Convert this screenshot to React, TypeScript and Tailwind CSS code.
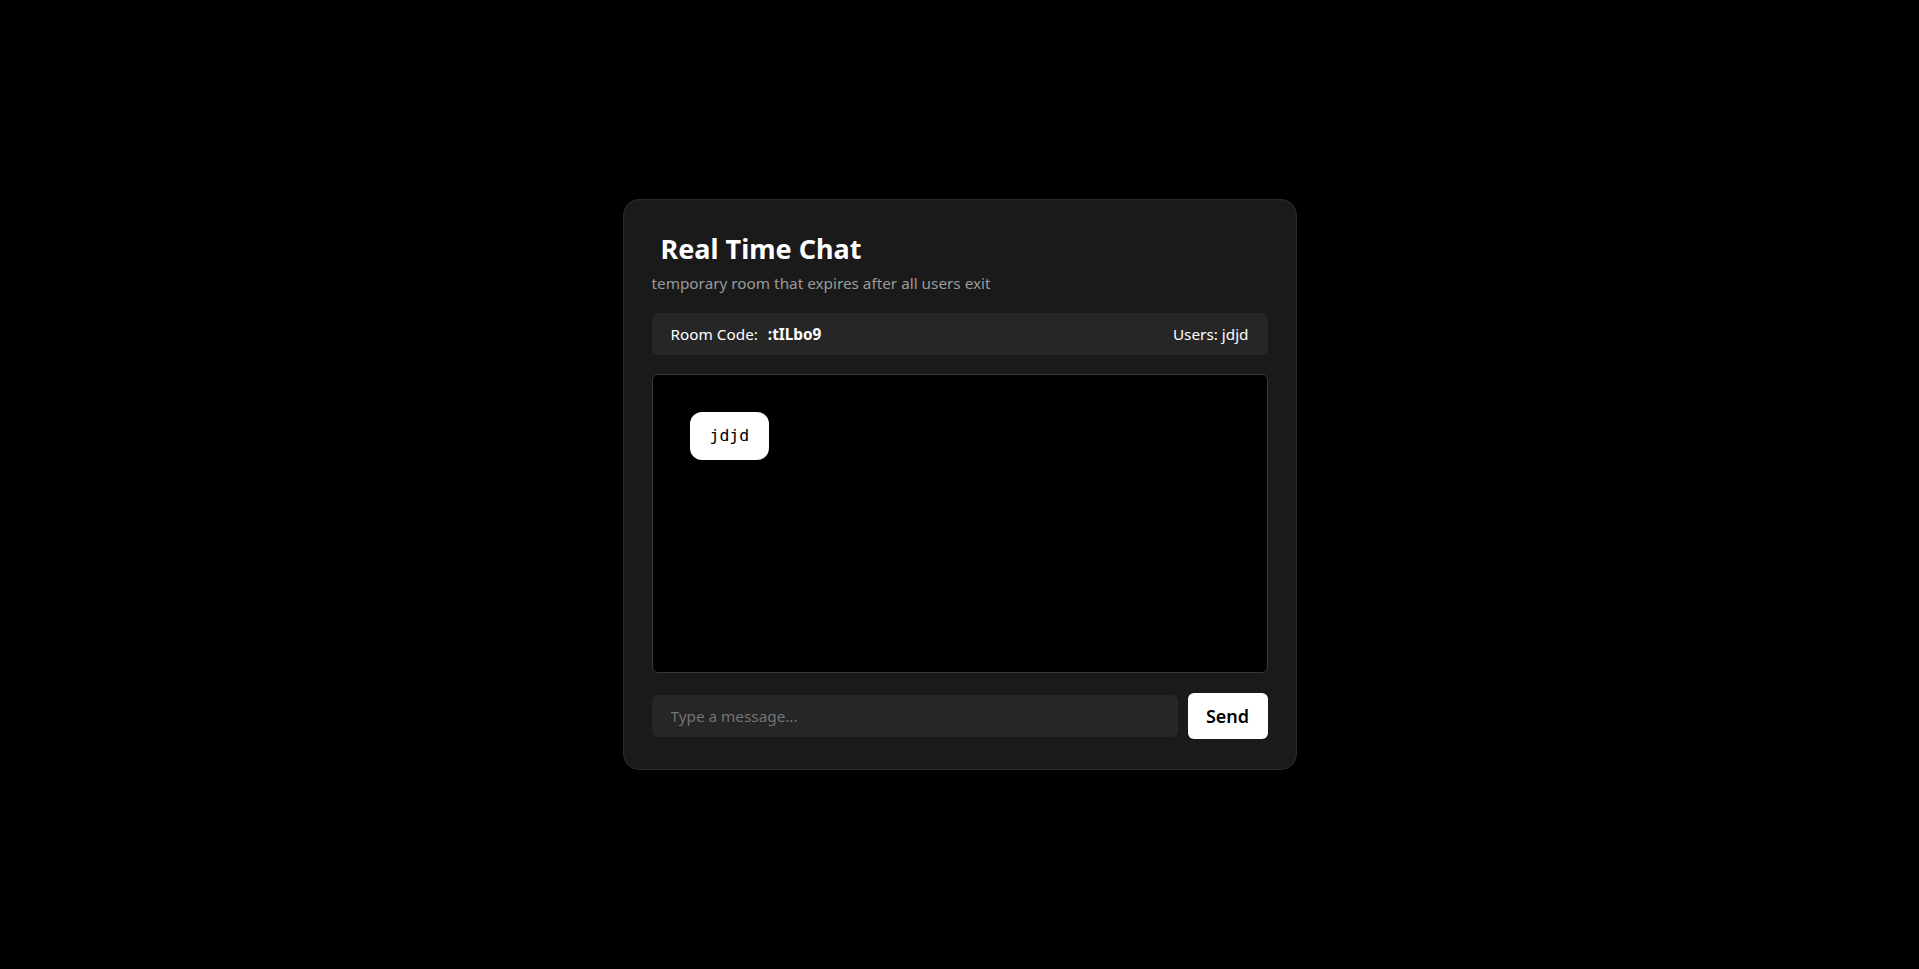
import React from 'react'

const App = () => {
  return (
    <div className="min-h-screen bg-black flex items-center justify-center" style={{ fontFamily: '"Noto Sans", "Open Sans", sans-serif' }}>
      <div className="w-[674px] rounded-2xl border border-[#2c2c2c] bg-[#1a1a1a] px-[28px] pt-[32px] pb-[30px]">
        <h1 className="pl-[9px] text-[27px] font-bold leading-[34px] text-white">Real Time Chat</h1>
        <p className="mt-[6px] text-[15.3px] leading-[22px] text-[#9a9a9a]">temporary room that expires after all users exit</p>

        <div className="mt-[19px] flex h-[42px] items-center justify-between rounded-md bg-[#262626] px-[19px] text-[15.3px] text-white">
          <div>
            Room Code: <span className="ml-[6px] font-bold">:tILbo9</span>
          </div>
          <div>Users: jdjd</div>
        </div>

        <div className="mt-[19px] h-[299px] rounded-md border border-[#3a3a3a] bg-black p-[37px]">
          <div className="inline-block rounded-xl bg-white px-[20px] py-[12px] text-[16.5px] leading-[24px] text-black" style={{ fontFamily: '"DejaVu Sans Mono", monospace' }}>
            jdjd
          </div>
        </div>

        <div className="mt-[20px] flex items-center gap-[10px]">
          <input
            className="h-[42px] flex-1 rounded-md bg-[#262626] px-[19px] text-[15.3px] text-white placeholder-[#737373] outline-none"
            placeholder="Type a message..."
          />
          <button className="h-[46px] w-[80px] rounded-md bg-white text-[18px] font-semibold text-black">Send</button>
        </div>
      </div>
    </div>
  )
}

export default App
